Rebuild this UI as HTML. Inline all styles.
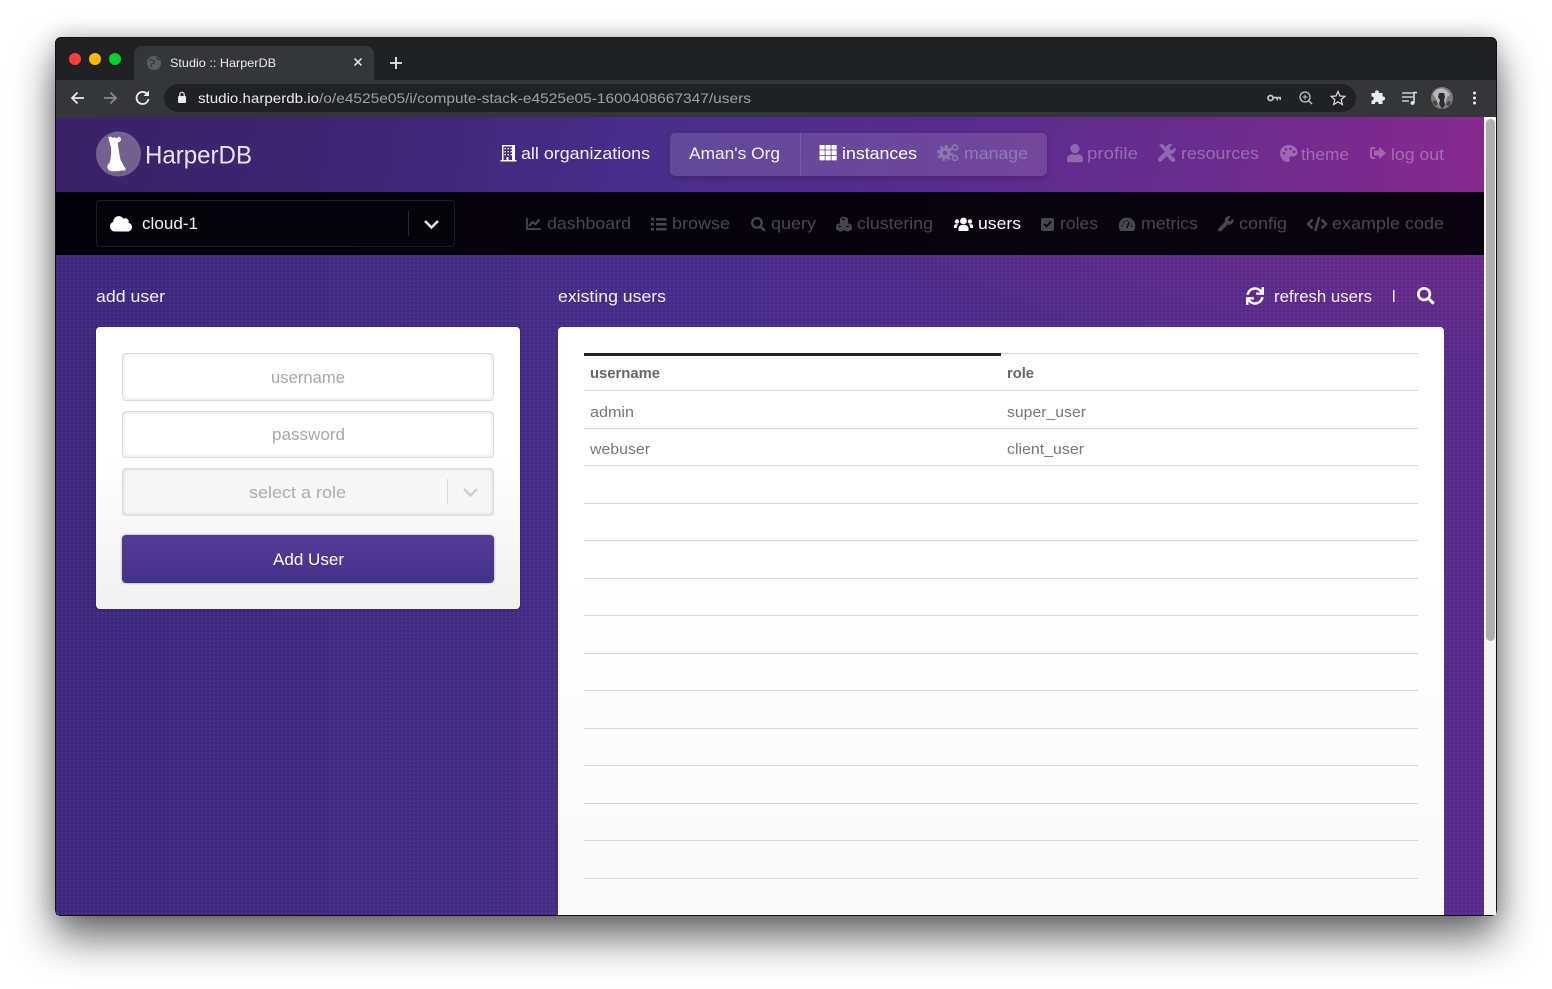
<!DOCTYPE html>
<html><head><meta charset="utf-8"><title>Studio :: HarperDB</title>
<style>
html,body{margin:0;padding:0;width:1552px;height:989px;background:#fff;overflow:hidden}
div{box-sizing:border-box}
.a{position:absolute}
#win{left:55px;top:37px;width:1442px;height:879px;border-radius:6px;background:#202124;box-shadow:0 22px 42px rgba(0,0,0,.58),0 0 22px rgba(0,0,0,.2);border:1px solid #111;overflow:hidden}
#page{left:56px;top:117px;width:1428px;height:798px;overflow:hidden;background:radial-gradient(760px 260px at 100% 0,rgba(142,40,142,.75),rgba(130,40,140,0) 100%),linear-gradient(90deg,#3f2a82 0,#482e8c 40%,#512d8f 75%,#592c8e 100%)}
#dots{left:0;top:0;width:1428px;height:798px;background-image:radial-gradient(circle at 2px 2px,rgba(255,255,255,.045) 1px,rgba(0,0,0,.04) 1.3px);background-size:4px 4px}
#hdr{left:0;top:0;width:1428px;height:75px;background:linear-gradient(100deg,#392266 0,#3f2676 22%,#4a2e8c 42%,#572c8e 62%,#6d2b8e 82%,#882a90 100%)}
#nav{left:0;top:75px;width:1428px;height:63px;background:linear-gradient(90deg,#030208,#0a030f)}
.card{border-radius:4px;box-shadow:0 1px 3px rgba(0,0,0,.25)}
.inp{left:122px;width:372px;border:1px solid #dcdcdc;border-radius:4px;background:#fff;box-shadow:inset 0 0 4px rgba(0,0,0,.14)}
svg{position:absolute;left:0;top:0}
text{font-family:"Liberation Sans",sans-serif;white-space:pre}
</style></head><body>
<div id="win" class="a"></div>
<div class="a" style="left:56px;top:80px;width:1440px;height:37px;background:#35363a"></div>
<div class="a" style="left:134px;top:46px;width:240px;height:34px;background:#35363a;border-radius:8px 8px 0 0"></div>
<div class="a" style="left:164px;top:84px;width:1192px;height:28px;background:#202124;border-radius:14px"></div>
<div id="page" class="a">
 <div id="hdr" class="a"></div>
 <div id="dots" class="a" style="top:138px;height:660px"></div>
 <div id="nav" class="a"></div>
</div>
<div class="a" style="left:1484px;top:117px;width:12px;height:798px;background:#f4f4f4"></div>
<div class="a" style="left:1486px;top:119px;width:9px;height:522px;background:#afafaf;border-radius:5px"></div>
<div class="a" style="left:670px;top:133px;width:377px;height:43px;border-radius:5px;background:rgba(255,255,255,.13);box-shadow:0 2px 6px rgba(0,0,0,.2)"></div>
<div class="a" style="left:800px;top:133px;width:1px;height:43px;background:rgba(255,255,255,.12)"></div>
<div class="a" style="left:96px;top:200px;width:359px;height:47px;border:1px solid #1d1c24;border-radius:4px;background:#04030a"></div>
<div class="a" style="left:408px;top:211px;width:1px;height:25px;background:#2b2a31"></div>
<div class="a card" style="left:96px;top:327px;width:424px;height:282px;background:linear-gradient(180deg,#fff 0,#fff 45%,#f1f1f1 100%)"></div>
<div class="a inp" style="top:353px;height:48px"></div>
<div class="a inp" style="top:411px;height:47px"></div>
<div class="a inp" style="top:468px;height:48px;background:#f7f7f7"></div>
<div class="a" style="left:447px;top:479px;width:1px;height:25px;background:#dadada"></div>
<div class="a" style="left:122px;top:535px;width:372px;height:48px;border-radius:4px;background:linear-gradient(180deg,#533c98,#45308a);box-shadow:0 0 2px rgba(0,0,0,.45)"></div>
<div class="a" style="left:558px;top:327px;width:886px;height:588px;border-radius:4px 4px 0 0;background:linear-gradient(180deg,#fff 0,#fff 40%,#f9f9f9 100%)"></div>
<div class="a" style="left:584px;top:353px;width:834px;height:1px;background:#d8d8d8"></div>
<div class="a" style="left:584px;top:353px;width:417px;height:3px;background:#222"></div>
<div class="a" style="left:584px;top:390px;width:834px;height:1px;background:#d8d8d8"></div>
<div class="a" style="left:584px;top:428px;width:834px;height:1px;background:#d8d8d8"></div>
<div class="a" style="left:584px;top:465px;width:834px;height:1px;background:#d8d8d8"></div>
<div class="a" style="left:584px;top:503px;width:834px;height:1px;background:#d8d8d8"></div>
<div class="a" style="left:584px;top:540px;width:834px;height:1px;background:#d8d8d8"></div>
<div class="a" style="left:584px;top:578px;width:834px;height:1px;background:#d8d8d8"></div>
<div class="a" style="left:584px;top:615px;width:834px;height:1px;background:#d8d8d8"></div>
<div class="a" style="left:584px;top:653px;width:834px;height:1px;background:#d8d8d8"></div>
<div class="a" style="left:584px;top:690px;width:834px;height:1px;background:#d8d8d8"></div>
<div class="a" style="left:584px;top:728px;width:834px;height:1px;background:#d8d8d8"></div>
<div class="a" style="left:584px;top:765px;width:834px;height:1px;background:#d8d8d8"></div>
<div class="a" style="left:584px;top:803px;width:834px;height:1px;background:#d8d8d8"></div>
<div class="a" style="left:584px;top:840px;width:834px;height:1px;background:#d8d8d8"></div>
<div class="a" style="left:584px;top:878px;width:834px;height:1px;background:#d8d8d8"></div>

<svg width="1552" height="989" viewBox="0 0 1552 989">
<defs>
<path id="search" d="M505 442.7L405.3 343c-4.5-4.5-10.6-7-17-7H372c27.6-35.3 44-79.7 44-128C416 93.1 322.9 0 208 0S0 93.1 0 208s93.1 208 208 208c48.3 0 92.7-16.4 128-44v16.3c0 6.4 2.5 12.5 7 17l99.7 99.7c9.4 9.4 24.6 9.4 33.9 0l28.3-28.3c9.4-9.4 9.4-24.6.1-34zM208 336c-70.7 0-128-57.2-128-128 0-70.7 57.2-128 128-128 70.7 0 128 57.2 128 128 0 70.7-57.2 128-128 128z"/>
<path id="wrench" d="M507.73 109.1c-2.24-9.03-13.54-12.09-20.12-5.51l-74.36 74.36-67.88-11.31-11.31-67.88 74.36-74.36c6.62-6.62 3.43-17.9-5.66-20.16-47.38-11.74-99.55.91-136.58 37.93-39.64 39.64-50.55 97.1-34.05 147.2L18.74 402.76c-24.99 24.99-24.99 65.51 0 90.5 24.99 24.99 65.51 24.99 90.5 0l213.21-213.21c50.12 16.71 107.47 5.68 147.37-34.22 37.07-37.07 49.7-89.32 37.91-136.73z"/>
</defs>

<!-- traffic lights -->
<circle cx="75" cy="59" r="6" fill="#fc3d39"/><circle cx="95" cy="59" r="6" fill="#fdb60d"/><circle cx="115" cy="59" r="6" fill="#04d02f"/>
<!-- tab -->
<circle cx="154" cy="63" r="7" fill="#5a5c60"/><path d="M149.500 60.500c2-1.500 3.500-.5 4.500.5s0 2.500-1.500 2.500-1 2.500-1 3.500M156 57.500c1 1.500 2.500 2 3.500 2.500" stroke="#35363a" stroke-width="1.300" fill="none"/>
<text x="170" y="67" font-size="12" fill="#e8eaed" textLength="106" lengthAdjust="spacingAndGlyphs">Studio :: HarperDB</text>
<path d="M354.500 58.500l7 7M361.500 58.500l-7 7" stroke="#e8eaed" stroke-width="1.500"/>
<path d="M396 57v12M390 63h12" stroke="#e8eaed" stroke-width="1.800"/>
<!-- toolbar -->
<path d="M84 98H72M77.500 92.500L72 98l5.500 5.500" stroke="#e8eaed" stroke-width="1.800" fill="none"/>
<path d="M104 98h12M110.500 92.500L116 98l-5.500 5.500" stroke="#86888b" stroke-width="1.800" fill="none"/>
<path d="M147.500 94.500a6 6 0 1 0 1 4.500" stroke="#e8eaed" stroke-width="1.800" fill="none"/><path d="M149 90.500v5.500h-5.500z" fill="#e8eaed"/>
<rect x="178" y="96" width="8" height="7" rx="1" fill="#e8eaed"/><path d="M179.800 96v-1.500a2.200 2.200 0 0 1 4.400 0V96" stroke="#e8eaed" stroke-width="1.200" fill="none"/>
<text x="198" y="103" font-size="14" fill="#e8eaed" textLength="121" lengthAdjust="spacingAndGlyphs">studio.harperdb.io</text>
<text x="319" y="103" font-size="14" fill="#9aa0a6" textLength="432" lengthAdjust="spacingAndGlyphs">/o/e4525e05/i/compute-stack-e4525e05-1600408667347/users</text>
<circle cx="1270.500" cy="98" r="2.500" fill="none" stroke="#c4c7ca" stroke-width="1.800"/><path d="M1273 96.800h8v3.200h-1.500v-1.500h-1.500v2h-1.500v-2H1273z" fill="#c4c7ca"/>
<circle cx="1305" cy="97" r="5" fill="none" stroke="#c4c7ca" stroke-width="1.300"/><path d="M1308.500 100.500l3.500 3.500" stroke="#c4c7ca" stroke-width="1.500"/><path d="M1305 94.500v5M1302.500 97h5" stroke="#c4c7ca"/>
<path d="M1338 91.500l2 4.500 4.800.4-3.600 3.200 1.100 4.800-4.300-2.500-4.300 2.500 1.100-4.800-3.600-3.200 4.800-.4z" fill="none" stroke="#d6d8da" stroke-width="1.300"/>
<path d="M1371 95h3.500c-.6-3.500 4.500-3.500 3.900 0h3.600v3.500c3.500-.6 3.500 4.500 0 3.900v3.600h-4c.6-3-3.900-3-3.500 0H1371v-3.500c3 .6 3-4.500 0-3.900z" fill="#e8eaed" transform="translate(.5,-2)"/>
<path d="M1402 93h11M1402 97h11M1402 101h7" stroke="#e8eaed" stroke-width="1.300"/><path d="M1414 103V92.500h3" stroke="#e8eaed" stroke-width="1.500" fill="none"/><circle cx="1412.500" cy="103" r="1.900" fill="#e8eaed"/>
<circle cx="1442" cy="98" r="11" fill="#7e7e7e"/><path d="M1433 94c3-6 9-6 11-5s5 3 6 6l-3 2-2 8-4 3-4-6-2-5z" fill="#b8b8b8"/><path d="M1439 93h5l1 4-1 3 1 5-3 4-3-5 1-4-2-3z" fill="#2c2c2c"/><path d="M1432 102l4-2 2 4-3 2zM1448 101l3 1-2 4-3-1z" fill="#444"/>
<circle cx="1474.500" cy="93" r="1.500" fill="#e8eaed"/><circle cx="1474.500" cy="98" r="1.500" fill="#e8eaed"/><circle cx="1474.500" cy="103" r="1.500" fill="#e8eaed"/>

<!-- logo -->
<circle cx="118.500" cy="154" r="22.500" fill="#75608f"/>
<path d="M110.500 136.500l2.500 1.500 1.500-1 1 1 2-.3 1.500-1.200 1.500 1.200.8 2.300-1.500 1.700-2 .8.500 5 1.200 7 1 5.500 2 3.500 1.500 3 1.700 1.800-.5 2.200h-4l-2.500.6-7 .2-3-1-1.500-2.500.5-3 1.800-1.800 1-3.500.7-6-.2-6-1.300-4.500-1-3.500-.3-2.500z" fill="#fff"/>
<text x="145" y="163.500" font-size="25" fill="#e8e3ef" textLength="107" lengthAdjust="spacingAndGlyphs">HarperDB</text>

<!-- header nav -->
<g fill="#fff">
<path fill-rule="evenodd" d="M502 145h13v15h1.500v1.500h-16V160h1.500zM503.500 146.500V160h3v-3h2v3h3.500v-13.500z"/>
<path d="M505 148h1.400v1.400H505zM508 148h1.400v1.400H508zM511 148h1.400v1.400H511zM505 151h1.400v1.400H505zM508 151h1.400v1.400H508zM511 151h1.400v1.400H511zM505 154h1.400v1.400H505zM508 154h1.400v1.400H508zM511 154h1.400v1.400H511z" transform="translate(-.5,0)"/>
<rect x="819.500" y="145" width="5.200" height="4.600" rx=".5"/><rect x="825.500" y="145" width="5.200" height="4.600" rx=".5"/><rect x="831.500" y="145" width="5.200" height="4.600" rx=".5"/>
<rect x="819.500" y="150.400" width="5.200" height="4.600" rx=".5"/><rect x="825.500" y="150.400" width="5.200" height="4.600" rx=".5"/><rect x="831.500" y="150.400" width="5.200" height="4.600" rx=".5"/>
<rect x="819.500" y="155.800" width="5.200" height="4.600" rx=".5"/><rect x="825.500" y="155.800" width="5.200" height="4.600" rx=".5"/><rect x="831.500" y="155.800" width="5.200" height="4.600" rx=".5"/>
</g>
<text x="521" y="159" font-size="17" fill="#f2f0f8" textLength="129" lengthAdjust="spacingAndGlyphs">all organizations</text>
<text x="689" y="159" font-size="17" fill="#f4f2f8" textLength="91" lengthAdjust="spacingAndGlyphs">Aman's Org</text>
<text x="842" y="159" font-size="17" fill="#fff" textLength="75" lengthAdjust="spacingAndGlyphs">instances</text>
<g fill="none" stroke="#8b76ae">
<circle cx="945" cy="153" r="4" stroke-width="3.500"/><circle cx="945" cy="153" r="6.800" stroke-width="2.500" stroke-dasharray="2.800 2.500"/>
<circle cx="955" cy="147.500" r="2.500" stroke-width="1.800"/><circle cx="955" cy="158" r="2.500" stroke-width="1.800"/>
</g>
<text x="964" y="159" font-size="17" fill="#8f7bb2" textLength="64" lengthAdjust="spacingAndGlyphs">manage</text>

<g fill="#8d6aae">
<g transform="translate(1067,144) scale(.0357)"><path d="M224 256c70.700 0 128-57.300 128-128S294.700 0 224 0 96 57.300 96 128s57.300 128 128 128zm89.600 32h-16.700c-22.200 10.200-46.900 16-72.900 16s-50.600-5.800-72.900-16h-16.700C60.200 288 0 348.200 0 422.400V464c0 26.500 21.500 48 48 48h352c26.500 0 48-21.500 48-48v-41.600c0-74.200-60.200-134.400-134.400-134.400z"/></g>
<text x="1087" y="159" font-size="17" textLength="51" lengthAdjust="spacingAndGlyphs" fill="#946eb4">profile</text>
<g transform="translate(1158,144) scale(.0345)"><use href="#wrench"/></g>
<path d="M1159 145l3-1.500 6.500 6.500-2.500 2.500z"/><path d="M1169 153l5.500 5.500a2 2 0 0 1-3 3l-5-5.500z"/>
<text x="1181" y="159" font-size="17" textLength="78" lengthAdjust="spacingAndGlyphs" fill="#986eb6">resources</text>
<path fill-rule="evenodd" d="M1288.500 145c5 0 9 3.200 9 7.200 0 3-2.300 4.300-5 4.300h-1.800c-1.400 0-1.700 1.300-1.200 2.200.6 1.100.3 3.200-1.500 3.200-4.600 0-8-3.800-8-8.400s3.500-8.500 8.500-8.500zM1284 152a1.300 1.300 0 1 0 0 2.600 1.300 1.300 0 0 0 0-2.600zM1286 148a1.300 1.300 0 1 0 0 2.600 1.300 1.300 0 0 0 0-2.600zM1290.500 147.500a1.300 1.300 0 1 0 0 2.600 1.300 1.300 0 0 0 0-2.600zM1294 150.500a1.300 1.300 0 1 0 0 2.600 1.300 1.300 0 0 0 0-2.600z" fill="#a068b0"/>
<text x="1301" y="160" font-size="17" textLength="48" lengthAdjust="spacingAndGlyphs" fill="#a26cb6">theme</text>
<path d="M1375 147h-2.500a2.500 2.500 0 0 0-2.500 2.500v7a2.500 2.500 0 0 0 2.500 2.500h2.500v-2h-2.500a.6.6 0 0 1-.5-.5v-7a.6.6 0 0 1 .5-.5h2.500z" fill="#a466b0"/><path d="M1379 147l7 6-7 6v-3.500h-5v-5h5z" fill="#a466b0"/>
<text x="1391" y="160" font-size="17" textLength="53" lengthAdjust="spacingAndGlyphs" fill="#a66cb4">log out</text>
</g>

<!-- cloud selector -->
<g transform="translate(110,215) scale(.0345)"><path fill="#fff" d="M537.600 226.600c4.100-10.700 6.400-22.400 6.400-34.600 0-53-43-96-96-96-19.700 0-38.100 6-53.300 16.200C367 64.200 315.300 32 256 32c-88.400 0-160 71.600-160 160 0 2.700.1 5.400.2 8.100C40.200 219.800 0 273.200 0 336c0 79.500 64.500 144 144 144h368c70.700 0 128-57.300 128-128 0-61.900-44-113.600-102.400-125.400z"/></g>
<text x="142" y="229" font-size="17" fill="#f4f4f4" textLength="56" lengthAdjust="spacingAndGlyphs">cloud-1</text>
<path d="M425 221l6.500 6.500 6.500-6.500" stroke="#e8e8e8" stroke-width="2.500" fill="none"/>

<!-- second nav -->
<g fill="#49474e" stroke="none">
<path d="M526 218h1.800v10.200H541v1.800h-15z"/><path d="M529 226l3.500-4 3 2 4-4.500" stroke="#49474e" stroke-width="2" fill="none"/>
<text x="547" y="229" font-size="17" textLength="84" lengthAdjust="spacingAndGlyphs">dashboard</text>
<path d="M651 218h3v2.500h-3zM656 218h10.500v2.500H656zM651 223h3v2.500h-3zM656 223h10.500v2.500H656zM651 228h3v2.500h-3zM656 228h10.500v2.500H656z"/>
<text x="672" y="229" font-size="17" textLength="58" lengthAdjust="spacingAndGlyphs">browse</text>
<g transform="translate(751,217) scale(.0285)"><use href="#search"/></g>
<text x="771" y="229" font-size="17" textLength="45" lengthAdjust="spacingAndGlyphs">query</text>
<path fill-rule="evenodd" d="M843.500 216.500l4.500 1.800v5l3.800 1.500v5l-4 1.900-3.800-1.700-3.800 1.700-4-1.900v-5l3.800-1.500v-5zM843.500 218.300l-2.200.9 2.200.9 2.200-.9zM839.700 225.600l-2 .8 2 .8 2-.8zM847.600 225.600l-2 .8 2 .8 2-.8z"/>
<text x="857" y="229" font-size="17" textLength="76" lengthAdjust="spacingAndGlyphs">clustering</text>
<rect x="1041" y="218" width="13" height="13" rx="2"/>
<text x="1060" y="229" font-size="17" textLength="38" lengthAdjust="spacingAndGlyphs">roles</text>
<path d="M1127 217.500a8.300 8.300 0 0 0-8.300 8.300c0 1.900.6 3.700 1.600 5.200h13.400c1-1.500 1.600-3.300 1.600-5.200a8.300 8.300 0 0 0-8.300-8.300z"/>
<text x="1141" y="229" font-size="17" textLength="57" lengthAdjust="spacingAndGlyphs">metrics</text>
<g transform="translate(1218,216) scale(.0303)"><use href="#wrench"/></g>
<text x="1239" y="229" font-size="17" textLength="48" lengthAdjust="spacingAndGlyphs">config</text>
<text x="1332" y="229" font-size="17" textLength="112" lengthAdjust="spacingAndGlyphs">example code</text>
</g>
<path d="M1044 224l2.500 2.500 4.500-5" stroke="#06040a" stroke-width="1.800" fill="none"/>
<path d="M1127 228l2.200-6M1121.500 226h1.500M1123.500 221.500l1 1M1127 220v1M1131 226h1.500" stroke="#06040a" stroke-width="1.300" fill="none"/>
<path d="M1312.500 219.500l-4.500 4.500 4.500 4.500M1321.500 219.500l4.500 4.500-4.500 4.500M1319.200 217l-4 14" stroke="#49474e" stroke-width="2.400" fill="none"/>
<g fill="#fff">
<circle cx="963.500" cy="221" r="3.400"/><circle cx="957" cy="221.500" r="2.200"/><circle cx="970" cy="221.500" r="2.200"/>
<path d="M958.500 231v-2.500c0-2 1.500-3.500 3.500-3.500h3c2 0 3.500 1.500 3.500 3.500v2.500z"/><path d="M954 228v-2c0-1 .8-1.800 2-1.800h2.200l-1 1.500-.5 2.300zM973 228v-2c0-1-.8-1.800-2-1.800h-2.200l1 1.500.5 2.300z"/>
<text x="978" y="229" font-size="17" textLength="43" lengthAdjust="spacingAndGlyphs">users</text>
</g>

<!-- section titles -->
<text x="96" y="302" font-size="17" fill="#f4f2f8" textLength="69" lengthAdjust="spacingAndGlyphs">add user</text>
<text x="558" y="302" font-size="17" fill="#f4f2f8" textLength="108" lengthAdjust="spacingAndGlyphs">existing users</text>
<g transform="translate(1246,287) scale(.0352)"><path fill="#fff" d="M440.650 12.570l4 82.770A247.160 247.160 0 0 0 255.830 8C134.730 8 33.910 94.920 12.290 209.820A12 12 0 0 0 24.090 224h49.050a12 12 0 0 0 11.670-9.260 175.910 175.910 0 0 1 317-56.940l-101.460-4.860a12 12 0 0 0-12.570 12v47.410a12 12 0 0 0 12 12H500a12 12 0 0 0 12-12V12a12 12 0 0 0-12-12h-47.370a12 12 0 0 0-11.980 12.570zM255.830 432a175.610 175.610 0 0 1-146-77.800l101.800 4.870a12 12 0 0 0 12.570-12v-47.400a12 12 0 0 0-12-12H12a12 12 0 0 0-12 12V500a12 12 0 0 0 12 12h47.350a12 12 0 0 0 12-12.600l-4.150-82.570A247.170 247.170 0 0 0 255.830 504c121.110 0 221.930-86.920 243.550-201.820a12 12 0 0 0-11.800-14.180h-49.050a12 12 0 0 0-11.670 9.260A175.860 175.860 0 0 1 255.830 432z"/></g>
<text x="1274" y="302" font-size="17" fill="#f4f2f8" textLength="98" lengthAdjust="spacingAndGlyphs">refresh users</text>
<rect x="1393" y="290" width="1.500" height="12" fill="#eee"/>
<g transform="translate(1417,287) scale(.0342)"><use href="#search" fill="#fff"/></g>

<!-- form -->
<text x="271" y="383" font-size="17" fill="#a8a8a8" textLength="74" lengthAdjust="spacingAndGlyphs">username</text>
<text x="272" y="440" font-size="17" fill="#a8a8a8" textLength="73" lengthAdjust="spacingAndGlyphs">password</text>
<text x="249" y="498" font-size="17" fill="#acacac" textLength="97" lengthAdjust="spacingAndGlyphs">select a role</text>
<path d="M464 489l6.500 6.500 6.500-6.500" stroke="#cfcfcf" stroke-width="2.500" fill="none"/>
<text x="273" y="565" font-size="17" fill="#fff" textLength="71" lengthAdjust="spacingAndGlyphs">Add User</text>

<!-- table -->
<text x="590" y="378" font-size="14.500" font-weight="700" fill="#666" textLength="70" lengthAdjust="spacingAndGlyphs">username</text>
<text x="1007" y="378" font-size="14.500" font-weight="700" fill="#666" textLength="27" lengthAdjust="spacingAndGlyphs">role</text>
<text x="590" y="417" font-size="14.500" fill="#777" textLength="44" lengthAdjust="spacingAndGlyphs">admin</text>
<text x="1007" y="417" font-size="14.500" fill="#777" textLength="79" lengthAdjust="spacingAndGlyphs">super_user</text>
<text x="590" y="454" font-size="14.500" fill="#777" textLength="60" lengthAdjust="spacingAndGlyphs">webuser</text>
<text x="1007" y="454" font-size="14.500" fill="#777" textLength="77" lengthAdjust="spacingAndGlyphs">client_user</text>
</svg>
</body></html>
